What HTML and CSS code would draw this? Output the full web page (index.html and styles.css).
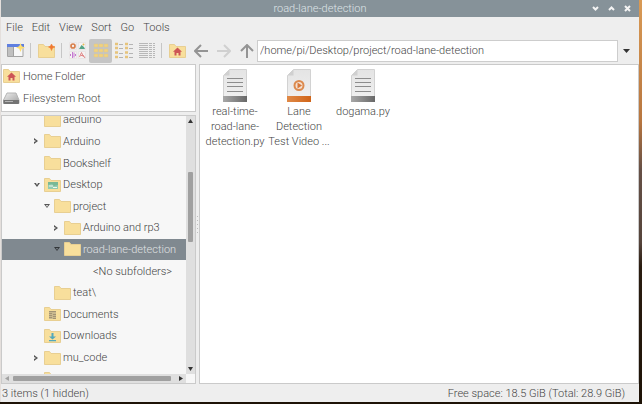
FILE: index.html
```html
<!DOCTYPE html>
<html lang="en">
<head>
<meta charset="utf-8">
<title>road-lane-detection</title>
<link rel="stylesheet" href="styles.css">
</head>
<body>
<svg class="defs" aria-hidden="true">
  <defs>
    <linearGradient id="metal" x1="0" y1="0" x2="1" y2="0"><stop offset="0" stop-color="#a8a8a8"/><stop offset="1" stop-color="#686868"/></linearGradient>
    <linearGradient id="orange" x1="0" y1="0" x2="1" y2="0"><stop offset="0" stop-color="#e08a48"/><stop offset="1" stop-color="#d06418"/></linearGradient>
    <linearGradient id="paper" x1="0" y1="0" x2="0" y2="1"><stop offset="0" stop-color="#e4e4e4"/><stop offset="1" stop-color="#f1f1f1"/></linearGradient>
    <linearGradient id="disk" x1="0" y1="0" x2="1" y2="1"><stop offset="0" stop-color="#eeeeee"/><stop offset="1" stop-color="#a0a0a0"/></linearGradient>
    <symbol id="folder" viewBox="0 0 17 14"><path d="M.5 13.500V.5h5l1.500 2h9.500v11z" fill="#f8df9c" stroke="#e8cf92"/></symbol>
    <symbol id="page" viewBox="0 0 24 33"><path d="M.5 32V6.500L6.500.5h17V32z" fill="url(#paper)" stroke="#d2d2d2"/><path d="M.5 6.500h6v-6z" fill="#d0d0d0"/></symbol>
    <symbol id="script" viewBox="0 0 24 33"><use href="#page"/><path d="M4 9.500h16M4 13.500h16M4 17.500h16M4 22.500h16" stroke="#8d8d8d"/><path d="M0 27h24v6H0z" fill="url(#metal)"/></symbol>
    <symbol id="home" viewBox="0 0 17 14"><use href="#folder"/><path d="M8.500 3.500L4 7.800h1.500v3.700h2V9h2v2.500h2V7.800H13z" fill="#cd5656"/></symbol>
  </defs>
</svg>
<main class="window">
  <header class="titlebar">
    <h1>road-lane-detection</h1>
    <div class="controls">
      <button aria-label="Minimize"><svg width="7" height="7" viewBox="0 0 7 7"><path d="M1 2l2.500 2.500L6 2"/></svg></button>
      <button aria-label="Maximize"><svg width="7" height="7" viewBox="0 0 7 7"><path d="M1 5l2.500-2.500L6 5"/></svg></button>
      <button aria-label="Close"><svg width="7" height="7" viewBox="0 0 7 7"><path d="M1 1l5 5M6 1L1 6"/></svg></button>
    </div>
  </header>
  <nav class="menu">
    <button>File</button><button>Edit</button><button>View</button><button>Sort</button><button>Go</button><button>Tools</button>
  </nav>
  <div class="toolbar">
    <button class="tool" aria-label="New window"><svg width="18" height="15" viewBox="0 0 18 15"><path d="M.5 1.500h15.500v12H.5z" fill="#f8f8f8" stroke="#a4a4a4"/><path d="M1 4h5v9H1z" fill="#c0c0c0"/><path d="M6.500 4v9" stroke="#a0a0a0"/><path d="M0 1h17v3H0z" fill="#5f7fe0"/><path d="M13.500 0l1.300 3.200L18 4.500l-3.200 1.300L13.500 9l-1.300-3.200L9 4.500l3.200-1.300z" fill="#ffdf70"/></svg></button>
    <span class="sep"></span>
    <button class="tool" aria-label="New folder"><svg width="18" height="15" viewBox="0 0 18 15"><use href="#folder" x="0" y="1" width="17" height="14"/><path d="M13.500 1l1 2 2.500 1-2.500 1-1 2.500-1-2.500L10.500 4l2-1z" fill="#f07830" stroke="#f08038" stroke-width=".6"/></svg></button>
    <span class="sep"></span>
    <div class="views">
      <button class="view" aria-label="Thumbnails"><svg width="17" height="17" viewBox="0 0 17 17"><path d="M.5.500h7v7h-7zM9.500.500h7v7h-7zM.5 9.500h7v7h-7zM9.500 9.500h7v7h-7z" fill="#f5f2f2" stroke="#e9e5e5"/><circle cx="4" cy="4" r="2" fill="none" stroke="#d8804c" stroke-width="1.700"/><path d="M10 7l2.500-4L15 5l1 2z" fill="#54a486"/><circle cx="14.500" cy="2.500" r="1" fill="#e6b850"/><path d="M1.500 12v2M3.500 10v6M5 10.500v5M6.500 12v2" stroke="#c47ad0"/><path d="M10.500 15L12.500 10.500l2 4.500M11.500 13.500h2.500M14 13l2 3" fill="none" stroke="#e08888"/></svg></button>
      <button class="view active" aria-label="Icons" aria-pressed="true"><svg width="16" height="16" viewBox="0 0 16 16"><path d="M1 1h4v3H1zM6 1h4v3H6zM11 1h4v3h-4zM1 6h4v3H1zM6 6h4v3H6zM11 6h4v3h-4zM1 11h4v3H1zM6 11h4v3H6zM11 11h4v3h-4z" fill="#f2d27e" stroke="#d8c48e" stroke-width=".5"/></svg></button>
      <button class="view" aria-label="Compact list"><svg width="18" height="17" viewBox="0 0 18 17"><path d="M0 2h3M0 6h3M0 10.500h3M0 15h3M10 2h3M10 6h3M10 10.500h3M10 15h3" stroke="#e6c47c" stroke-width="2.500"/><path d="M4 2.500h4M4 6.500h4M4 11.500h4M4 15.500h4M14 2.500h4M14 6.500h4M14 11.500h4M14 15.500h4" stroke="#b4b4b4"/></svg></button>
      <button class="view" aria-label="Detailed list"><svg width="16" height="16" viewBox="0 0 16 16"><path d="M0 .5h16M0 2.500h16M0 4.500h16M0 6.500h16M0 8.500h16M0 10.500h16M0 12.500h16M0 14.500h16" stroke="#b8b8b8"/><path d="M9.500 0v16M13.500 0v16" stroke="#eee"/></svg></button>
    </div>
    <span class="sep"></span>
    <button class="tool" aria-label="Home"><svg width="17" height="14"><use href="#home"/></svg></button>
    <div class="travel">
      <button aria-label="Back"><svg width="14" height="14" viewBox="0 0 14 14"><path d="M14 7H1M7 1L1 7l6 6"/></svg></button>
      <button aria-label="Forward" disabled><svg width="14" height="14" viewBox="0 0 14 14"><path d="M0 7h13M7 1l6 6-6 6"/></svg></button>
      <button aria-label="Up"><svg width="14" height="14" viewBox="0 0 14 14"><path d="M7 14V1M1 7l6-6 6 6"/></svg></button>
    </div>
    <input class="path" type="text" aria-label="Location" value="/home/pi/Desktop/project/road-lane-detection">
    <button class="drop" aria-label="Recent locations"><svg width="7" height="4" viewBox="0 0 7 4"><path d="M0 0h7L3.500 4z"/></svg></button>
  </div>
  <div class="content">
    <aside class="side">
      <nav class="places">
        <a href="#home-folder"><svg width="17" height="14"><use href="#home"/></svg>Home Folder</a>
        <a href="#root"><svg width="17" height="14" viewBox="0 0 17 14"><path d="M4 2h9l3 7v3.500H.5V9z" fill="url(#disk)" stroke="#b4b4b4"/><path d="M.5 9h15.500v3q0 1-1 1H1.500q-1 0-1-1z" fill="#747474"/><path d="M2 10.500h8" stroke="#b4b4b4"/></svg>Filesystem Root</a>
      </nav>
      <div class="treebox">
        <ul class="tree" role="tree">
          <li role="treeitem"><i></i><svg width="17" height="14"><use href="#folder"/></svg>aeduino</li>
          <li role="treeitem"><button class="closed" aria-label="Expand Arduino"></button><svg width="17" height="14"><use href="#folder"/></svg>Arduino</li>
          <li role="treeitem"><i></i><svg width="17" height="14"><use href="#folder"/></svg>Bookshelf</li>
          <li role="treeitem"><button class="open" aria-label="Collapse Desktop"></button><svg width="17" height="14" viewBox="0 0 17 14"><use href="#folder"/><path d="M4 4h10v7H4z" fill="#78b896"/><path d="M4 7l4-1 2 2 4-1v4H4z" fill="#92cbb0"/><path d="M5 8h4M9 9.500h4" stroke="#edf6ed"/></svg>Desktop</li>
          <li role="treeitem" class="level1"><button class="open" aria-label="Collapse project"></button><svg width="17" height="14"><use href="#folder"/></svg>project</li>
          <li role="treeitem" class="level2"><button class="closed" aria-label="Expand Arduino and rp3"></button><svg width="17" height="14"><use href="#folder"/></svg>Arduino and rp3</li>
          <li role="treeitem" class="level2 selected" aria-selected="true"><button class="open" aria-label="Collapse road-lane-detection"></button><svg width="17" height="14"><use href="#folder"/></svg>road-lane-detection</li>
          <li role="treeitem" class="empty">&lt;No subfolders&gt;</li>
          <li role="treeitem" class="level1"><i></i><svg width="17" height="14"><use href="#folder"/></svg>teat\</li>
          <li role="treeitem"><i></i><svg width="17" height="14" viewBox="0 0 17 14"><use href="#folder"/><path d="M5 4h7v8H5z" fill="#c9b88e"/><path d="M5 4.500h7M5 6.500h3M5 8.500h3M5 10.500h3M9 7.500h3M9 9.500h3M9 11.500h3" stroke="#a39475"/></svg>Documents</li>
          <li role="treeitem"><i></i><svg width="17" height="14" viewBox="0 0 17 14"><use href="#folder"/><path d="M7.500 4h2v3.500H12L8.500 10.500 5 7.500h2.500zM5 11h7v1.200H5z" fill="#52a8bc"/></svg>Downloads</li>
          <li role="treeitem"><button class="closed" aria-label="Expand mu_code"></button><svg width="17" height="14"><use href="#folder"/></svg>mu_code</li>
          <li role="treeitem"><i></i><svg width="17" height="14"><use href="#folder"/></svg>Music</li>
        </ul>
        <div class="vscroll">
          <svg width="5" height="4" viewBox="0 0 5 4"><path d="M0 4h5L2.500 0z"/></svg>
          <div class="vtrack"><span></span></div>
          <svg width="5" height="4" viewBox="0 0 5 4"><path d="M0 0h5L2.500 4z"/></svg>
        </div>
        <div class="hscroll">
          <svg class="dim" width="4" height="5" viewBox="0 0 4 5"><path d="M4 0v5L0 2.500z"/></svg>
          <span></span>
          <svg width="4" height="5" viewBox="0 0 4 5"><path d="M0 0v5l4-2.500z"/></svg>
        </div>
      </div>
    </aside>
    <div class="splitter"><span></span></div>
    <section class="files">
      <figure><svg width="24" height="33"><use href="#script"/></svg><figcaption>real-time-<br>road-lane-<br>detection.py</figcaption></figure>
      <figure><svg width="24" height="33" viewBox="0 0 24 33"><use href="#page"/><path d="M0 27h24v6H0z" fill="url(#orange)"/><circle cx="12" cy="16.500" r="4.500" fill="#f4e0d0" stroke="#dc8a4e" stroke-width="2"/><path d="M10.500 13.500v6l4.500-3z" fill="#d8783a"/></svg><figcaption>Lane<br>Detection<br>Test Video ...</figcaption></figure>
      <figure><svg width="24" height="33"><use href="#script"/></svg><figcaption>dogama.py</figcaption></figure>
    </section>
  </div>
  <footer class="status"><span>3 items (1 hidden)</span><span>Free space: 18.5 GiB (Total: 28.9 GiB)</span></footer>
</main>
</body>
</html>
```
FILE: styles.css
```css
* { box-sizing: border-box; }
html, body { height: 100%; }
body {
  margin: 0;
  padding: 0 3px 2px 0;
  overflow: hidden;
  color: #444;
  font: 300 11px/15px Roboto, "Liberation Sans", sans-serif;
  background: linear-gradient(#d99a55, #b8763f 30%, #665046 42%, #55443b 60%, #2a1c10 66%, #1d1206);
}
svg { display: block; flex: none; }
button { margin: 0; padding: 0; border: 0; background: none; color: inherit; font: inherit; }
.defs { position: absolute; width: 0; height: 0; }

.window { height: 100%; display: flex; flex-direction: column; background: #eee; border-left: 1px solid #e4dfdc; }

.titlebar { display: grid; grid-template-columns: 1fr auto 1fr; align-items: center; height: 17px; flex: none; background: #869299; color: #dfe4e7; }
.titlebar h1 { grid-column: 2; margin: 0; font: inherit; }
.controls { justify-self: end; display: flex; gap: 9px; padding-right: 8px; }
.controls path { fill: none; stroke: #f4f4f4; stroke-width: 2; }

.menu { display: flex; gap: 9px; height: 20px; flex: none; padding-left: 5px; align-items: center; }

.toolbar { display: flex; align-items: center; height: 27px; flex: none; padding-left: 6px; }
.sep { width: 1px; height: 15px; margin: 0 7px 0 5px; background: #c6c6c6; }
.views { display: flex; margin: 0 -2px 0 -3px; }
.view { width: 23px; height: 24px; display: grid; place-items: center; }
.view.active { background: #c5c5c5; border-radius: 2px; }
.travel { display: flex; gap: 9px; padding: 0 3px 0 8px; }
.travel path { fill: none; stroke: #949494; stroke-width: 2; }
.travel button:disabled path { stroke: #d0d0d0; }
.path { flex: 1; min-width: 0; height: 22px; padding: 0 2px; border: 1px solid #cdcdcd; background: #fff; color: #444; font: inherit; }
.drop { padding: 0 9px 0 5px; }

.content { display: flex; flex: 1; min-height: 0; }
.side { display: flex; flex-direction: column; gap: 3px; width: 195px; flex: none; }
.places { padding: 0 1px 2px; border: 1px solid #cacaca; background: #fff; }
.places a { display: flex; align-items: center; gap: 3px; height: 22px; color: inherit; text-decoration: none; }

.treebox { flex: 1; min-height: 0; display: grid; grid-template: 1fr 9px / 1fr 9px; border: 1px solid #cacaca; background: #f7f7f7; overflow: hidden; }
.tree { list-style: none; padding: 0; min-height: 0; overflow: hidden; display: flex; flex-direction: column; margin: -7px 0 -16px; clip-path: inset(7px 0 16px); }
.tree li { flex: 1; min-height: 0; display: flex; align-items: center; padding-left: 30px; white-space: nowrap; }
.tree li svg { margin-right: 2px; }
.tree .level1 { padding-left: 40px; }
.tree .level2 { padding-left: 50px; }
.tree .empty { padding-left: 91px; }
.tree .selected { background: #808990; color: #e0e3e5; }
.tree i { width: 12px; }
.tree button { width: 12px; height: 12px; display: flex; align-items: center; padding-left: 2px; }
.tree button::before { content: ""; border: solid transparent; }
.tree .closed::before { border-width: 3px 0 3px 4px; border-left-color: #555; }
.tree .open::before { border-width: 4px 3px 0; border-top-color: #555; }
.tree button::after { content: ""; border: solid transparent; }
.tree .closed::after { margin-left: -4px; border-width: 1px 0 1px 2px; border-left-color: #f7f7f7; }
.tree .open::after { margin: -1px 0 0 -4px; border-width: 2px 1px 0; border-top-color: #f7f7f7; }
.tree .selected .open::before { border-top-color: #33373a; }
.tree .selected .open::after { border-top-color: #808990; }

.vscroll { z-index: 1; display: flex; flex-direction: column; align-items: center; padding: 3px 0; background: #dfdfdf; }
.vtrack { flex: 1; width: 5px; display: grid; grid-template-rows: 49fr 70fr 126fr; }
.vtrack span { grid-row: 2; background: #a0a0a0; border-radius: 1px; }
.hscroll { z-index: 1; grid-column: 1; display: flex; align-items: center; gap: 4px; padding: 0 3px; background: #dfdfdf; }
.hscroll span { flex: 1; height: 5px; margin-right: 4px; background: #a0a0a0; border-radius: 1px; }
.hscroll .dim { opacity: .35; }
.vscroll path, .hscroll path, .drop path { fill: #333; }

.splitter { width: 3px; flex: none; display: grid; place-items: center; }
.splitter span { width: 1px; height: 17px; background: repeating-linear-gradient(#bcbcbc 0 1px, #eee 1px 4px); }

.files { flex: 1; display: flex; align-items: flex-start; padding: 4px 3px; border: 1px solid #cacaca; background: #fff; }
.files figure { margin: 0; width: 64px; display: flex; flex-direction: column; align-items: center; gap: 2px; text-align: center; white-space: nowrap; }

.status { display: flex; justify-content: space-between; align-items: center; height: 18px; flex: none; padding: 0 14px 0 1px; }
```
